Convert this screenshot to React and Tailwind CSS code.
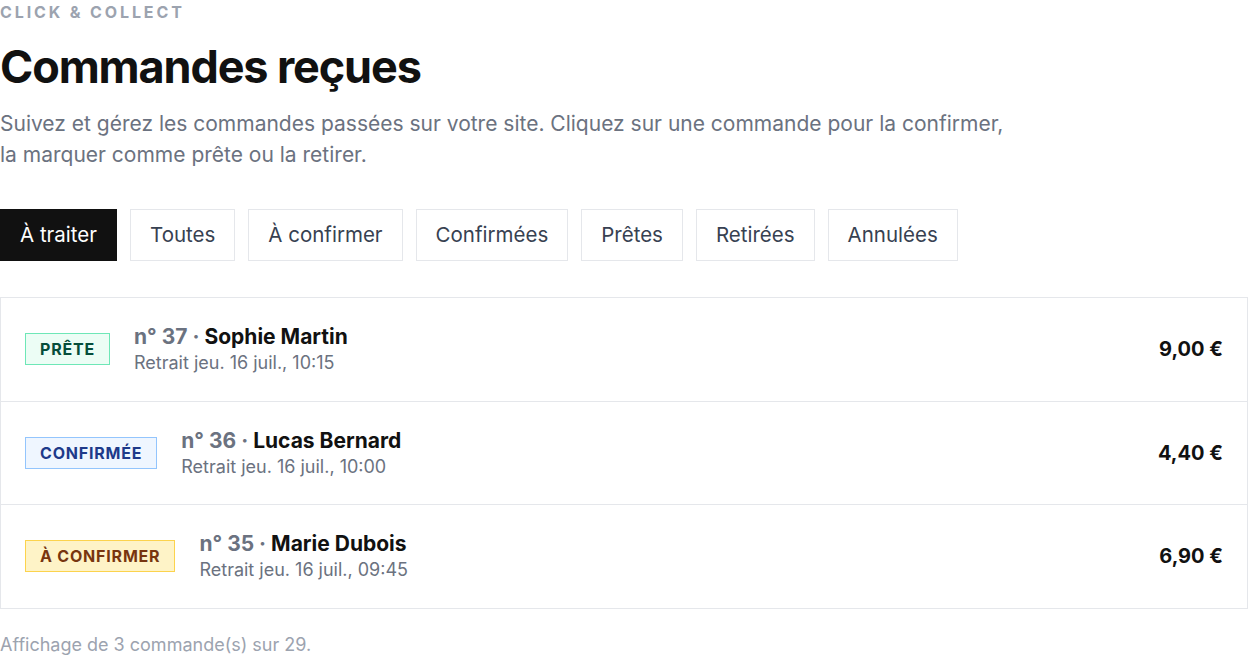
import React from 'react';

const TABS = ['À traiter', 'Toutes', 'À confirmer', 'Confirmées', 'Prêtes', 'Retirées', 'Annulées'];

const ORDERS = [
  {
    id: 37,
    name: 'Sophie Martin',
    pickup: 'Retrait jeu. 16 juil., 10:15',
    total: '9,00 €',
    status: 'Prête',
    badge: 'bg-[#ecfdf5] border-[#6ee7b7] text-[#064e3b]',
  },
  {
    id: 36,
    name: 'Lucas Bernard',
    pickup: 'Retrait jeu. 16 juil., 10:00',
    total: '4,40 €',
    status: 'Confirmée',
    badge: 'bg-[#eff6ff] border-[#93c5fd] text-[#1e3a8a]',
  },
  {
    id: 35,
    name: 'Marie Dubois',
    pickup: 'Retrait jeu. 16 juil., 09:45',
    total: '6,90 €',
    status: 'À confirmer',
    badge: 'bg-[#fef3c7] border-[#fcd34d] text-[#78350f]',
  },
];

const App = () => {
  const active = 'À traiter';

  return (
    <main className="min-h-screen bg-white font-['Inter',sans-serif] text-[#111111]">
      <p className="text-base leading-6 font-bold uppercase tracking-[0.18em] text-[#9ca3af]">
        Click &amp; Collect
      </p>
      <h1 className="mt-5 text-[45px] leading-none font-bold tracking-[-0.025em]">
        Commandes reçues
      </h1>
      <p className="mt-[19px] max-w-[1010px] text-[21px] leading-[31px] text-[#6b7280]">
        Suivez et gérez les commandes passées sur votre site. Cliquez sur une commande pour la
        confirmer, la marquer comme prête ou la retirer.
      </p>

      <div className="mt-[39px] flex gap-[13px]">
        {TABS.map((tab) => (
          <button
            key={tab}
            className={
              tab === active
                ? 'border border-[#111111] bg-[#111111] px-[19px] py-[11px] text-[20.5px] leading-7 text-white'
                : 'border border-[#e5e7eb] bg-white px-[19px] py-[11px] text-[20.5px] leading-7 text-[#374151]'
            }
          >
            {tab}
          </button>
        ))}
      </div>

      {/* liste des commandes */}
      <ul className="mt-9 border border-[#e5e7eb]">
        {ORDERS.map((order, i) => (
          <li
            key={order.id}
            className={
              'flex items-center justify-between px-6 py-[25px] ' +
              (i > 0 ? 'border-t border-[#e5e7eb]' : '')
            }
          >
            <div className="flex items-center gap-6">
              <span
                className={`border px-[14px] py-[4px] text-base leading-[22px] font-bold uppercase tracking-[0.05em] ${order.badge}`}
              >
                {order.status}
              </span>
              <div>
                <p className="text-[21px] leading-7 font-bold">
                  <span className="text-[#6b7280]">n° {order.id} · </span>
                  {order.name}
                </p>
                <p className="text-lg leading-[24.5px] text-[#6b7280]">{order.pickup}</p>
              </div>
            </div>
            <span className="text-xl leading-7 font-bold">{order.total}</span>
          </li>
        ))}
      </ul>

      <p className="mt-[22px] text-lg leading-7 text-[#9ca3af]">
        Affichage de 3 commande(s) sur 29.
      </p>
    </main>
  );
};

export default App;
